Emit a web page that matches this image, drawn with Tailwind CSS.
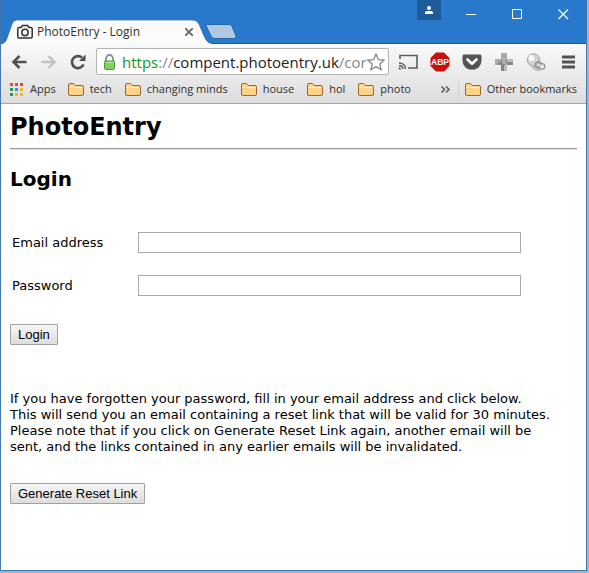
<!DOCTYPE html>
<html lang="en">
<head>
  <meta charset="UTF-8">
  <meta name="viewport" content="width=device-width, initial-scale=1.0">
  <title>PhotoEntry - Login</title>
  <script src="https://cdn.jsdelivr.net/npm/@tailwindcss/browser@4"></script>
</head>
<body class="flex flex-col min-h-screen bg-[#9db5d3] pr-[2px] pb-[2px]">

  <!-- Window -->
  <div class="grow flex flex-col border border-t-0 border-[#4577b0] bg-white font-['Open_Sans',sans-serif] text-[#303030]">

    <!-- Title bar -->
    <header class="h-11 flex items-end justify-between bg-[#2879cc] border-b border-[#1d5a9c]">
      <div class="flex items-end">
        <div class="relative w-[212px] h-6 -mb-px flex items-center pl-4 pr-3">
          <svg class="absolute inset-0 w-full h-full" viewBox="0 0 212 24" preserveAspectRatio="none">
            <path d="M0 24 C4 23 5 21 6 18 L11 4 Q12 0 16 0 H192 Q196 0 198 4 L204 18 Q206 23 212 24 Z" fill="#fbfbfb"/>
            <path d="M0 24 C4 23 5 21 6 18 L11 4 Q12 0 16 0 H192 Q196 0 198 4 L204 18 Q206 23 212 24" fill="none" stroke="#1d5a9c" stroke-width=".7"/>
          </svg>
          <svg class="relative w-4 h-4" viewBox="0 0 16 16" fill="none" stroke="#333" stroke-width="1.5">
            <path d="M2 3.5 H4 L5.500 1.500 H10.500 L12 3.500 H14 Q15.200 3.500 15.200 5 V12.500 Q15.200 14 14 14 H2 Q.8 14 .8 12.500 V5 Q.8 3.500 2 3.500 Z"/>
            <circle cx="8" cy="8.500" r="3.200"/>
          </svg>
          <span class="relative grow pl-1 text-xs">PhotoEntry - Login</span>
          <button class="relative mr-2" aria-label="Close tab">
            <svg class="w-2 h-2" viewBox="0 0 8 8" stroke="#666" stroke-width="1.8"><path d="M0 0 L8 8 M8 0 L0 8"/></svg>
          </button>
        </div>
        <button class="-ml-2 mb-1" aria-label="New tab">
          <svg class="w-8 h-[15px]" viewBox="0 0 32 15"><path d="M2.500 .5 H24 Q26 .5 27 2.500 L31 12 Q31.500 14.500 29 14.500 H10 Q7 14.500 6 12 L1.200 2 Q.5 .5 2.500 .5 Z" fill="#b1c8e1" stroke="#2367ad"/></svg>
        </button>
      </div>
      <div class="self-start flex items-start text-white">
        <button class="w-6 h-5 mr-[25px] flex justify-center items-center bg-[#1f5c9b]" aria-label="Profile">
          <svg class="w-2 h-2" viewBox="0 0 8 8" fill="currentColor"><circle cx="4" cy="2" r="2"/><path d="M0 8 V6.500 Q0 5 2 5 H6 Q8 5 8 6.500 V8 Z"/></svg>
        </button>
        <button class="pt-[9px] mr-[35px]" aria-label="Minimize">
          <svg class="w-[11px] h-[11px]" viewBox="0 0 11 11" stroke="currentColor"><path d="M0 5.500 H10"/></svg>
        </button>
        <button class="pt-[9px] mr-[35px]" aria-label="Maximize">
          <svg class="w-[11px] h-[11px]" viewBox="0 0 11 11" fill="none" stroke="currentColor"><path d="M.5 .5 H9.500 V9.500 H.5 Z"/></svg>
        </button>
        <button class="pt-[9px] mr-[17px]" aria-label="Close">
          <svg class="w-[11px] h-[11px]" viewBox="0 0 11 11" stroke="currentColor" stroke-width="1.200"><path d="M.5 .5 L10 10 M10 .5 L.5 10"/></svg>
        </button>
      </div>
    </header>

    <div class="h-[60px] flex flex-col bg-linear-to-b from-[#fafafa] to-[#dcdcdc] border-b border-[#a5a5a5]">
      <!-- Navigation and address -->
      <div class="flex items-center pt-1 pl-[10px] pr-2">
        <button class="mr-[14px]" aria-label="Back">
          <svg class="w-4 h-4" viewBox="0 0 16 16" fill="none" stroke="#505050" stroke-width="2.600"><path d="M15.500 8 H3 M8.500 2 L2.500 8 L8.500 14"/></svg>
        </button>
        <button class="mr-[13px]" aria-label="Forward">
          <svg class="w-4 h-4" viewBox="0 0 16 16" fill="none" stroke="#c2c2c2" stroke-width="2.400"><path d="M.5 8 H13 M7.500 2 L13.500 8 L7.500 14"/></svg>
        </button>
        <button class="mr-[10px]" aria-label="Reload">
          <svg class="w-4 h-4" viewBox="0 0 16 16"><path d="M13.500 10.500 A6 6 0 1 1 12 3.600" fill="none" stroke="#505050" stroke-width="2.600"/><path d="M15.500 .5 V7 H9 Z" fill="#505050"/></svg>
        </button>
        <div class="grow min-w-0 h-[27px] flex items-center bg-white border border-[#b3b3b3] rounded-xs pl-[7px] pr-[3px]">
          <svg class="w-[11px] h-4 shrink-0 mr-[7px]" viewBox="0 0 11 16">
            <path d="M2 8 V4.500 A3.500 3.500 0 0 1 9 4.500 V8" fill="none" stroke="#8d8d8d" stroke-width="1.800"/>
            <rect x=".5" y="7" width="10" height="8.500" rx="1" fill="#82d05c" stroke="#4ba030"/>
            <path d="M1.500 8.500 H9.500" stroke="#c0efa8"/>
          </svg>
          <div class="grow min-w-0 whitespace-nowrap text-[15px] leading-6"><span class="text-[#15941f]">https</span><span class="text-[#888]">://</span><span class="text-[#222]">compent.photoentry.uk</span><span class="text-[#888]">/cor</span></div>
          <button class="shrink-0" aria-label="Bookmark this page">
            <svg class="w-[18px] h-[18px]" viewBox="0 0 18 18" fill="#fff" stroke="#858585" stroke-width="1.300" stroke-linejoin="round"><path d="M9 1 L11.300 6.600 L17.200 7 L12.700 10.900 L14.200 16.800 L9 13.600 L3.800 16.800 L5.300 10.900 L.8 7 L6.700 6.600 Z"/></svg>
          </button>
        </div>
        <div class="flex items-center gap-3 pl-[9px]">
          <button aria-label="Cast">
            <svg class="w-5 h-5" viewBox="0 0 20 20" fill="none" stroke="#5c5c5c"><path d="M2 7 V3.500 H19 V16 H10" stroke-width="1.600"/><path d="M1 11 Q7 11 7.500 17 M1 13.500 Q4.500 13.500 5 17" stroke-width="1.400"/><path d="M1 15.500 L2.800 17 H1 Z" fill="#5c5c5c" stroke-width=".8"/></svg>
          </button>
          <button aria-label="Adblock Plus">
            <svg class="w-5 h-5" viewBox="0 0 20 20"><path d="M6 .5 H14 L19.500 6 V14 L14 19.500 H6 L.5 14 V6 Z" fill="#cc0d0d"/><text x="10" y="13.300" text-anchor="middle" font-family="Liberation Sans, sans-serif" font-size="8.500" font-weight="700" fill="#fff">ABP</text></svg>
          </button>
          <button aria-label="Pocket">
            <svg class="w-5 h-5" viewBox="0 0 20 20"><path d="M2 2.500 H18 Q19.500 2.500 19.500 4 V9 A9.500 8.800 0 0 1 .5 9 V4 Q.5 2.500 2 2.500 Z" fill="#545454"/><path d="M5.500 7.500 L10 11.800 L14.500 7.500" fill="none" stroke="#fff" stroke-width="2.600" stroke-linecap="round" stroke-linejoin="round"/></svg>
          </button>
          <button aria-label="Add-ons">
            <svg class="w-5 h-5" viewBox="0 0 20 20"><path d="M7 1 H13 V7 H19 V13 H13 V19 H7 V13 H1 V7 H7 Z" fill="#bcbcbc"/><path d="M7 1 H13 V7 H7 Z M1 7 H7 V13 H1 Z" fill="#aaa"/><path d="M7 7 L10 10 L13 7 V13 H19 V10 H13 L10 14 V19 H7 V13 H4 V10 H7 Z" fill="#858585"/><path d="M8 8 H12 V12 H8 Z" fill="#aaa"/></svg>
          </button>
          <button aria-label="Search tools">
            <svg class="w-5 h-5" viewBox="0 0 20 20"><path d="M6 14 Q9 19 14 18" stroke="#bbb" stroke-width="2" fill="none"/><circle cx="7.500" cy="8" r="6.300" fill="#d0d0d0" stroke="#a8a8a8"/><circle cx="5.500" cy="6" r="3" fill="#f8f8f8"/><circle cx="12.500" cy="13" r="3.500" fill="#aaa" stroke="#8e8e8e"/><circle cx="16" cy="14.500" r="2.800" fill="#e6e6e6" stroke="#929292" stroke-width="1.200"/><circle cx="12.500" cy="13" r="1.300" fill="#eee"/></svg>
          </button>
          <button aria-label="Menu">
            <svg class="w-5 h-5" viewBox="0 0 20 20" stroke="#515151" stroke-width="3"><path d="M4 5 H17 M4 10 H17 M4 15 H17"/></svg>
          </button>
        </div>
      </div>

      <!-- Bookmarks -->
      <nav class="grow flex items-center pl-[9px] pr-[9px] text-[11px] whitespace-nowrap">
        <a href="#" class="flex items-center gap-[7px] mr-3">
          <svg class="w-[13px] h-[13px]" viewBox="0 0 13 13">
            <path d="M0 0 H3 V3 H0 Z M5 0 H8 V3 H5 Z M10 0 H13 V3 H10 Z" fill="#dc4b43"/>
            <path d="M0 5 H3 V8 H0 Z M0 10 H3 V13 H0 Z" fill="#289557"/>
            <path d="M5 5 H8 V8 H5 Z" fill="#3f86e8"/>
            <path d="M10 5 H13 V8 H10 Z M5 10 H8 V13 H5 Z M10 10 H13 V13 H10 Z" fill="#ecb52d"/>
          </svg>
          Apps
        </a>
        <svg class="hidden">
          <symbol id="folder" viewBox="0 0 16 13">
            <path d="M.5 2 Q.5 .5 2 .5 H5.500 L7.500 2.500 H14 Q15.500 2.500 15.500 4 V11 Q15.500 12.500 14 12.500 H2 Q.5 12.500 .5 11 Z" fill="#fdd28a" stroke="#94682f"/>
            <path d="M1.500 4.500 H14.500" stroke="#fff0cc"/>
          </symbol>
        </svg>
        <a href="#" class="flex items-center gap-[6px] mr-[13px]"><svg class="w-4 h-[13px]"><use href="#folder"/></svg>tech</a>
        <a href="#" class="flex items-center gap-[6px] mr-[13px]"><svg class="w-4 h-[13px]"><use href="#folder"/></svg>changing minds</a>
        <a href="#" class="flex items-center gap-[6px] mr-[13px]"><svg class="w-4 h-[13px]"><use href="#folder"/></svg>house</a>
        <a href="#" class="flex items-center gap-[6px] mr-[13px]"><svg class="w-4 h-[13px]"><use href="#folder"/></svg>hol</a>
        <a href="#" class="flex items-center gap-[6px]"><svg class="w-4 h-[13px]"><use href="#folder"/></svg>photo</a>
        <button class="ml-auto mr-2" aria-label="More bookmarks">
          <svg class="w-[9px] h-[7px]" viewBox="0 0 9 7" fill="none" stroke="#555" stroke-width="1.500"><path d="M.5 .5 L3.500 3.500 L.5 6.500 M5 .5 L8 3.500 L5 6.500"/></svg>
        </button>
        <a href="#" class="flex items-center gap-[6px] border-l border-[#cdd3da] pl-[6px]"><svg class="w-4 h-[13px]"><use href="#folder"/></svg>Other bookmarks</a>
      </nav>
    </div>

    <!-- Page -->
    <main class="grow px-[9px] font-['DejaVu_Sans',sans-serif] text-[13px] leading-4 text-black">
      <h1 class="pt-[7px] text-2xl leading-8 font-bold">PhotoEntry</h1>
      <hr class="mt-[5px] border-t border-b border-t-[#959595] border-b-[#e6e6e6]">
      <h2 class="mt-[15px] text-xl leading-7 font-bold">Login</h2>

      <form class="mt-[39px]">
        <div class="flex items-center pl-[2px] mb-[22px]">
          <label for="email" class="w-[126px]">Email address</label>
          <input id="email" type="email" class="w-[383px] h-[21px] border border-[#a9a9a9] px-1">
        </div>
        <div class="flex items-center pl-[2px] mb-7">
          <label for="password" class="w-[126px]">Password</label>
          <input id="password" type="password" class="w-[383px] h-[21px] border border-[#a9a9a9] px-1">
        </div>
        <button type="submit" class="block h-[21px] px-[7px] border border-[#a0a0a0] rounded-[1px] bg-linear-to-b from-[#f6f6f6] to-[#dddddd] font-['Liberation_Sans',sans-serif]">Login</button>
        <p class="mt-[46px] mb-7">
          If you have forgotten your password, fill in your email address and click below.<br>
          This will send you an email containing a reset link that will be valid for 30 minutes.<br>
          Please note that if you click on Generate Reset Link again, another email will be<br>
          sent, and the links contained in any earlier emails will be invalidated.
        </p>
        <button type="button" class="block h-[21px] px-[7px] border border-[#a0a0a0] rounded-[1px] bg-linear-to-b from-[#f6f6f6] to-[#dddddd] font-['Liberation_Sans',sans-serif]">Generate Reset Link</button>
      </form>
    </main>
  </div>

</body>
</html>
